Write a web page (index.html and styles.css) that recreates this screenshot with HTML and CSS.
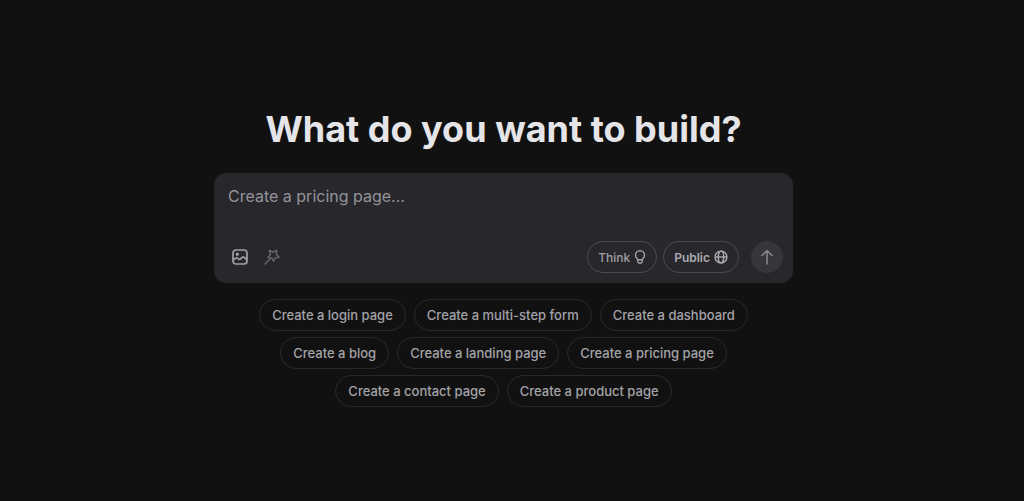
FILE: index.html
```html
<!DOCTYPE html>
<html lang="en">
<head>
<meta charset="utf-8">
<meta name="viewport" content="width=device-width, initial-scale=1">
<title>What do you want to build?</title>
<link rel="stylesheet" href="styles.css">
</head>
<body>
<main class="page">
  <h1 class="title">What do you want to build?</h1>
  <form class="composer">
    <textarea class="prompt" rows="1" aria-label="Prompt" placeholder="Create a pricing page..."></textarea>
    <div class="toolbar">
      <div class="tools">
        <button class="tool" type="button" aria-label="Add image">
          <svg viewBox="0 0 16 16" width="16" height="16" fill="none" stroke="currentColor" stroke-width="1.7" stroke-linecap="round" stroke-linejoin="round"><rect x="1" y="1" width="14" height="14" rx="3"/><circle cx="5.3" cy="5.3" r="1.2" fill="currentColor" stroke-width="1"/><path d="M1.3 11 3.7 9.1Q4.6 8.5 5.5 9.2L6.6 10.2Q7.4 10.8 8.2 10.1L10.3 8.3Q11.2 7.6 12.1 8.3L14.7 10.5"/></svg>
        </button>
        <button class="tool dim" type="button" aria-label="Enhance prompt">
          <svg viewBox="0 0 16 16" width="16" height="16" fill="none" stroke="currentColor" stroke-width="1.4" stroke-linecap="round" stroke-linejoin="round"><path d="M5.3 1.5 9 3.2 12.8 1.3 12.2 5.300 15 8.300 11.200 8.900 9.600 12.300 7.800 9 3.800 8.400 6.500 5.500Z"/><path d="M6.400 9.600 1 15"/></svg>
        </button>
      </div>
      <div class="actions">
        <button class="pill" type="button">Think
          <svg viewBox="0 0 12 14" width="12" height="14" fill="none" stroke="currentColor" stroke-width="1.4" stroke-linecap="round" stroke-linejoin="round"><path d="M3.7 9.8C3.6 8.7 1.500 7.800 1.500 5.200a4.500 4.500 0 0 1 9 0c0 2.600-2.100 3.500-2.200 4.600ZM3.800 10v1.800a1.200 1.200 0 0 0 1.200 1.200h2a1.200 1.200 0 0 0 1.200-1.200V10"/></svg>
        </button>
        <button class="pill strong" type="button">Public
          <svg viewBox="0 0 14 14" width="14" height="14" fill="none" stroke="currentColor" stroke-width="1.4"><circle cx="7" cy="7" r="5.9"/><ellipse cx="7" cy="7" rx="2.7" ry="5.9"/><path d="M1.1 7h11.8"/></svg>
        </button>
        <button class="send" type="submit" aria-label="Send">
          <svg viewBox="0 0 16 16" width="16" height="16" fill="none" stroke="currentColor" stroke-width="1.6" stroke-linecap="round" stroke-linejoin="round"><path d="M8 15V1.500M3 6.500l5-5 5 5"/></svg>
        </button>
      </div>
    </div>
  </form>
  <div class="suggestions">
    <button class="chip" type="button">Create a login page</button>
    <button class="chip" type="button">Create a multi-step form</button>
    <button class="chip" type="button">Create a dashboard</button>
    <button class="chip" type="button">Create a blog</button>
    <button class="chip" type="button">Create a landing page</button>
    <button class="chip" type="button">Create a pricing page</button>
    <button class="chip" type="button">Create a contact page</button>
    <button class="chip" type="button">Create a product page</button>
  </div>
</main>
</body>
</html>
```
FILE: styles.css
```css
* {
  box-sizing: border-box;
}

body {
  margin: 0;
  background: #111111;
  color: #e5e5e9;
  font-family: Inter, "Liberation Sans", sans-serif;
}

button,
textarea {
  margin: 0;
  border: 0;
  padding: 0;
  background: none;
  color: inherit;
  font: inherit;
}

svg {
  display: block;
  flex: none;
}

.page {
  display: flex;
  flex-direction: column;
  align-items: center;
  padding: 109px 25px 48px 8px;
}

.title {
  margin: 0 0 24px;
  font-size: 36px;
  line-height: 40px;
  font-weight: 700;
  text-align: center;
}

.composer {
  width: 100%;
  max-width: 579px;
  padding: 12px 10px 10px 14px;
  border-radius: 12px;
  background: #28272c;
}

.prompt {
  display: block;
  width: 100%;
  height: 56px;
  resize: none;
  outline: 0;
  font-size: 16px;
  line-height: 23px;
}

.prompt::placeholder {
  color: #94939a;
  opacity: 1;
}

.toolbar,
.tools,
.actions,
.pill {
  display: flex;
  align-items: center;
}

.toolbar {
  justify-content: space-between;
}

.tools {
  gap: 8px;
}

.tool {
  display: grid;
  place-items: center;
  width: 24px;
  height: 24px;
  color: #a09fa6;
}

.dim {
  color: #68676e;
}

.actions {
  gap: 6px;
}

.pill {
  gap: 4px;
  height: 32px;
  padding: 0 10px;
  border: 1px solid #4b4a51;
  border-radius: 16px;
  color: #a09fa6;
  font-size: 12px;
  font-weight: 500;
}

.strong {
  color: #acabb2;
  font-weight: 600;
}

.send {
  display: grid;
  place-items: center;
  width: 32px;
  height: 32px;
  margin-left: 6px;
  border-radius: 50%;
  background: #36353b;
  color: #85848b;
}

.suggestions {
  display: flex;
  flex-wrap: wrap;
  justify-content: center;
  gap: 6px 8px;
  max-width: 512px;
  margin-top: 16px;
}

.chip {
  height: 32px;
  padding: 0 12px;
  border: 1px solid #29292b;
  border-radius: 16px;
  color: #a3a3a8;
  font-size: 13px;
  font-weight: 500;
  line-height: 20px;
}
```
